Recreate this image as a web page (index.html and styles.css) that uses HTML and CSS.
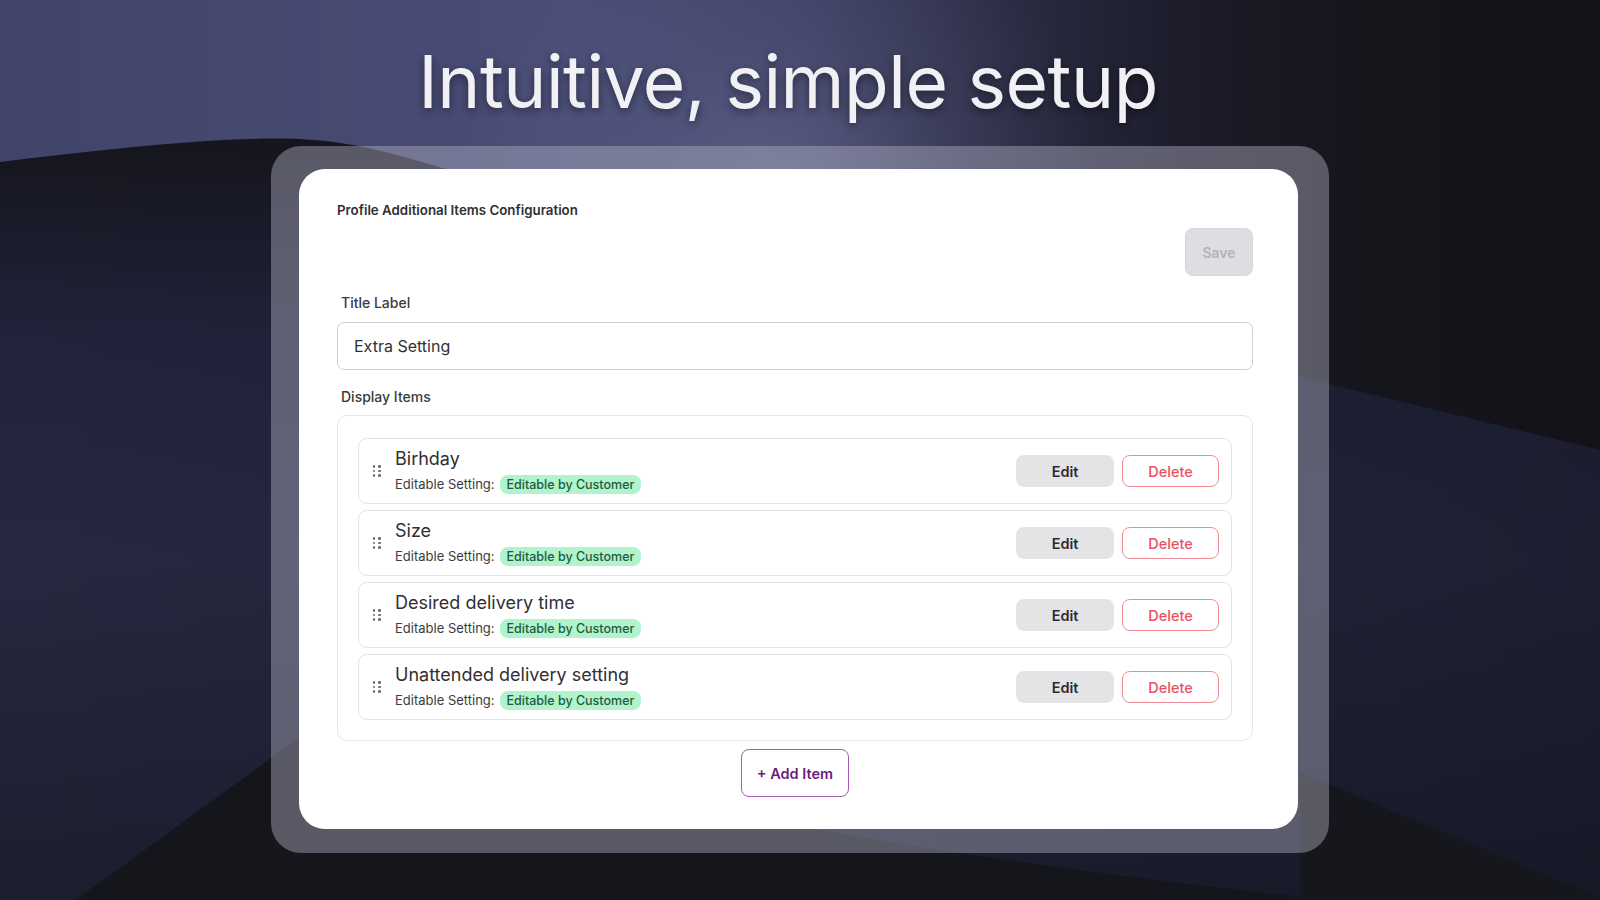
FILE: index.html
```html
<!DOCTYPE html>
<html lang="en">
<head>
<meta charset="utf-8">
<title>Intuitive, simple setup</title>
<link rel="stylesheet" href="styles.css">
</head>
<body>
<div class="stage">
  <svg class="backdrop" viewBox="0 0 1600 900" preserveAspectRatio="none" aria-hidden="true">
    <defs>
      <linearGradient id="topband" x1="0" y1="0" x2="1600" y2="0" gradientUnits="userSpaceOnUse">
        <stop offset="0" stop-color="#42456a"/>
        <stop offset="0.35" stop-color="#494c75"/>
        <stop offset="0.5" stop-color="#3d4063"/>
        <stop offset="0.62" stop-color="#2c2d45"/>
        <stop offset="0.74" stop-color="#1c1c2a"/>
        <stop offset="0.85" stop-color="#15151c"/>
        <stop offset="1" stop-color="#121217"/>
      </linearGradient>
      <radialGradient id="glow" cx="780" cy="200" r="320" gradientUnits="userSpaceOnUse">
        <stop offset="0" stop-color="#8084b0" stop-opacity="0.42"/>
        <stop offset="0.5" stop-color="#8084b0" stop-opacity="0.15"/>
        <stop offset="1" stop-color="#8084b0" stop-opacity="0"/>
      </radialGradient>
      <linearGradient id="midband" x1="0" y1="150" x2="0" y2="900" gradientUnits="userSpaceOnUse">
        <stop offset="0" stop-color="#16161f"/>
        <stop offset="0.25" stop-color="#20233a"/>
        <stop offset="0.55" stop-color="#25283f"/>
        <stop offset="1" stop-color="#1c1e2f"/>
      </linearGradient>
      <linearGradient id="rightshade" x1="0" y1="0" x2="1600" y2="0" gradientUnits="userSpaceOnUse">
        <stop offset="0" stop-color="#0c0c14" stop-opacity="0"/>
        <stop offset="0.7" stop-color="#0c0c14" stop-opacity="0.18"/>
        <stop offset="1" stop-color="#0c0c14" stop-opacity="0.32"/>
      </linearGradient>
    </defs>
    <rect x="0" y="0" width="1600" height="900" fill="url(#midband)"/>
    <rect x="0" y="0" width="1600" height="900" fill="url(#rightshade)"/>
    <path d="M0,0 H1600 V450 L450,170 C400,156 360,142 300,139 C220,136 100,150 0,162 Z" fill="url(#topband)"/>
    <path d="M0,0 H1600 V450 L450,170 C400,156 360,142 300,139 C220,136 100,150 0,162 Z" fill="url(#glow)"/>
    <path d="M76,900 L330,715 C600,800 950,860 1330,900 Z" fill="#15151c"/>
    <path d="M1300,772 L1600,898 L1600,900 L1300,900 Z" fill="#16161d"/>
  </svg>

  <h1 class="headline">Intuitive, simple setup</h1>

  <div class="frame">
    <div class="card">
      <div class="card-title">Profile Additional Items Configuration</div>
      <div class="save-row"><button class="btn btn-save" type="button">Save</button></div>

      <div class="field-label">Title Label</div>
      <div class="text-input">Extra Setting</div>

      <div class="field-label field-label-list">Display Items</div>
      <div class="item-list">
        <div class="item">
          <span class="handle"><i></i><i></i><i></i><i></i><i></i><i></i></span>
          <div class="item-body">
            <div class="item-name">Birhday</div>
            <div class="item-meta">Editable Setting: <span class="badge">Editable by Customer</span></div>
          </div>
          <div class="item-actions">
            <button class="btn btn-edit" type="button">Edit</button>
            <button class="btn btn-delete" type="button">Delete</button>
          </div>
        </div>
        <div class="item">
          <span class="handle"><i></i><i></i><i></i><i></i><i></i><i></i></span>
          <div class="item-body">
            <div class="item-name">Size</div>
            <div class="item-meta">Editable Setting: <span class="badge">Editable by Customer</span></div>
          </div>
          <div class="item-actions">
            <button class="btn btn-edit" type="button">Edit</button>
            <button class="btn btn-delete" type="button">Delete</button>
          </div>
        </div>
        <div class="item">
          <span class="handle"><i></i><i></i><i></i><i></i><i></i><i></i></span>
          <div class="item-body">
            <div class="item-name">Desired delivery time</div>
            <div class="item-meta">Editable Setting: <span class="badge">Editable by Customer</span></div>
          </div>
          <div class="item-actions">
            <button class="btn btn-edit" type="button">Edit</button>
            <button class="btn btn-delete" type="button">Delete</button>
          </div>
        </div>
        <div class="item">
          <span class="handle"><i></i><i></i><i></i><i></i><i></i><i></i></span>
          <div class="item-body">
            <div class="item-name">Unattended delivery setting</div>
            <div class="item-meta">Editable Setting: <span class="badge">Editable by Customer</span></div>
          </div>
          <div class="item-actions">
            <button class="btn btn-edit" type="button">Edit</button>
            <button class="btn btn-delete" type="button">Delete</button>
          </div>
        </div>
      </div>
      <div class="add-row"><button class="btn btn-add" type="button">+ Add Item</button></div>
    </div>
  </div>
</div>
</body>
</html>
```

FILE: styles.css
```css
* { box-sizing: border-box; }

html, body {
  margin: 0;
  padding: 0;
  width: 1600px;
  height: 900px;
  overflow: hidden;
  background: #1c1e2e;
  font-family: Inter, "Noto Sans", "Liberation Sans", sans-serif;
}

.stage {
  position: relative;
  width: 1600px;
  height: 900px;
  display: flex;
  flex-direction: column;
}

.backdrop {
  position: absolute;
  left: 0;
  top: 0;
  width: 1600px;
  height: 900px;
  z-index: 0;
}

.headline {
  position: relative;
  z-index: 1;
  margin: 45px 0 0 0;
  padding-right: 24px;
  height: 73px;
  font-size: 73px;
  line-height: 1;
  font-weight: 400;
  letter-spacing: -0.5px;
  text-align: center;
  color: #f1f1f5;
  text-shadow: 0 3px 8px rgba(0, 0, 0, 0.45);
}

.frame {
  position: relative;
  z-index: 1;
  margin: 28px 0 0 271px;
  width: 1058px;
  height: 707px;
  padding: 23px 31px 24px 28px;
  border-radius: 30px;
  background: rgba(172, 174, 190, 0.45);
}

.card {
  width: 999px;
  height: 660px;
  background: #ffffff;
  border-radius: 26px;
  padding: 33px 45px 0 38px;
  display: flex;
  flex-direction: column;
}

.card-title {
  font-size: 13.3px;
  line-height: 17px;
  font-weight: 600;
  color: #2f2f33;
}

.save-row {
  display: flex;
  justify-content: flex-end;
  margin-top: 9px;
}

.btn {
  font-family: Inter, "Noto Sans", "Liberation Sans", sans-serif;
  cursor: pointer;
  border-radius: 8px;
}

.btn-save {
  width: 68px;
  height: 48px;
  border: 1px solid #d6d6dc;
  background: #dedee2;
  color: #b3b3ba;
  font-size: 14px;
  font-weight: 600;
}

.field-label {
  margin: 18px 0 0 4px;
  font-size: 14px;
  line-height: 17px;
  font-weight: 500;
  color: #3a3a3f;
}

.text-input {
  margin-top: 11px;
  height: 48px;
  border: 1px solid #cfcfd4;
  border-radius: 7px;
  padding: 0 16px;
  display: flex;
  align-items: center;
  font-size: 16px;
  color: #303034;
}

.field-label-list {
  margin-top: 18px;
}

.item-list {
  margin-top: 10px;
  border: 1px solid #e6e6ea;
  border-radius: 10px;
  padding: 22px 20px 20px 20px;
  display: flex;
  flex-direction: column;
  gap: 6px;
}

.item {
  height: 66px;
  border: 1px solid #e3e3e6;
  border-radius: 9px;
  padding: 0 12px 0 14px;
  display: flex;
  align-items: center;
}

.handle {
  width: 8px;
  display: grid;
  grid-template-columns: 2.4px 2.4px;
  column-gap: 3px;
  row-gap: 2.2px;
  margin-right: 14px;
}

.handle i {
  display: block;
  width: 2.4px;
  height: 2.4px;
  border-radius: 50%;
  background: #6a6a70;
}

.item-body {
  flex: 1;
  display: flex;
  flex-direction: column;
}

.item-name {
  font-size: 18px;
  line-height: 22px;
  color: #303034;
  margin-bottom: 5px;
  margin-top: -1px;
}

.item-meta {
  display: flex;
  align-items: center;
  font-size: 13px;
  line-height: 19px;
  color: #3c3c40;
}

.badge {
  margin-left: 5px;
  height: 19px;
  padding: 0 7px;
  border-radius: 8px;
  background: #b0f3cd;
  color: #1f5a3d;
  font-size: 12.5px;
  font-weight: 500;
  display: inline-flex;
  align-items: center;
}

.item-actions {
  display: flex;
  gap: 8px;
}

.btn-edit {
  width: 98px;
  height: 32px;
  border: none;
  background: #e4e4e7;
  color: #2c2c31;
  font-size: 14.5px;
  font-weight: 600;
}

.btn-delete {
  width: 97px;
  height: 32px;
  border: 1.5px solid #f28b97;
  background: #ffffff;
  color: #e9515f;
  font-size: 14.5px;
  font-weight: 500;
}

.add-row {
  display: flex;
  justify-content: center;
  margin-top: 8px;
}

.btn-add {
  width: 108px;
  height: 48px;
  border: 1.5px solid #a45db1;
  background: #ffffff;
  color: #6b1c80;
  font-size: 14.5px;
  font-weight: 600;
}
```
